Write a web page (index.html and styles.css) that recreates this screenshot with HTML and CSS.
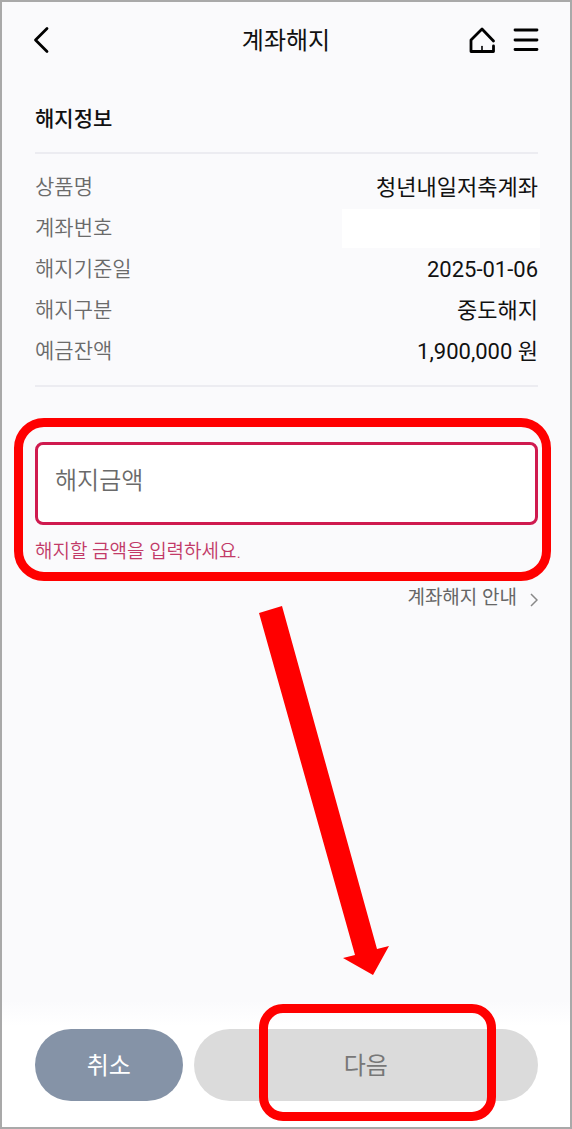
FILE: index.html
```html
<!DOCTYPE html>
<html lang="ko">
<head>
  <meta charset="UTF-8" />
  <meta name="viewport" content="width=device-width, initial-scale=1" />
  <title>계좌해지</title>
  <link rel="stylesheet" href="styles.css">
</head>
<body>
  <header class="top-bar">
    <button type="button" class="icon-btn" aria-label="뒤로">
      <svg width="18" height="28" viewBox="0 0 18 28"><path d="M14 2.500 2.500 14 14 25.500" /></svg>
    </button>
    <h1>계좌해지</h1>
    <div class="top-actions">
      <button type="button" class="icon-btn" aria-label="홈">
        <svg width="28" height="28" viewBox="0 0 28 28">
          <path d="M25.500 15 14 3 3 14v11.500h22.500V20" />
          <path class="door" d="M14 20.500v5" />
        </svg>
      </button>
      <button type="button" class="icon-btn" aria-label="메뉴">
        <svg width="26" height="28" viewBox="0 0 26 28"><path d="M2 4h22M2 14h22M2 23.500h22" /></svg>
      </button>
    </div>
  </header>

  <main>
    <h2>해지정보</h2>
    <dl class="info">
      <div class="row"><dt>상품명</dt><dd>청년내일저축계좌</dd></div>
      <div class="row"><dt>계좌번호</dt><dd class="masked"></dd></div>
      <div class="row"><dt>해지기준일</dt><dd>2025-01-06</dd></div>
      <div class="row"><dt>해지구분</dt><dd>중도해지</dd></div>
      <div class="row"><dt>예금잔액</dt><dd>1,900,000 원</dd></div>
    </dl>

    <div class="field marked">
      <input type="text" id="amount" inputmode="numeric" placeholder="해지금액" aria-label="해지금액" aria-describedby="amount-error" />
      <p class="error" id="amount-error">해지할 금액을 입력하세요.</p>
    </div>

    <div class="guide">
      <a href="#">계좌해지 안내
        <svg width="8" height="14" viewBox="0 0 8 14"><path d="M1 1l6 6-6 6" /></svg>
      </a>
      <svg class="arrow" width="131" height="371" viewBox="0 0 131 371"><path d="M0 8 23 1 118 344l12-3-16 29-30-17 12-3z" /></svg>
    </div>
  </main>

  <footer>
    <button type="button" class="cancel">취소</button>
    <div class="next-wrap marked">
      <button type="button" class="next">다음</button>
    </div>
  </footer>
</body>
</html>
```
FILE: styles.css
```css
:root {
  --bg: #fafafc;
  --text: #111;
  --muted: #6a6a6a;
  --line: #ececf1;
  --danger: #cf1a4f;
  --mark: #ff0000;
}
* {
  box-sizing: border-box;
}
body {
  margin: 0;
  min-height: 100vh;
  display: flex;
  flex-direction: column;
  border: 2px solid #a9a9a9;
  background: var(--bg);
  color: var(--text);
  font-family: Roboto, "Noto Sans CJK KR", sans-serif;
  font-size: 22px;
}
h1, h2, p, dl, dd {
  margin: 0;
}
button, input {
  font-family: inherit;
}
.top-bar {
  display: grid;
  grid-template-columns: 1fr auto 1fr;
  align-items: center;
  height: 76px;
  padding: 0 31px;
}
h1 {
  padding-top: 2px;
  font-size: 24px;
  font-weight: 400;
  line-height: 36px;
}
.top-actions {
  display: flex;
  justify-content: flex-end;
  gap: 17px;
}
.icon-btn {
  display: flex;
  justify-self: start;
  padding: 0;
  border: 0;
  background: none;
}
.icon-btn svg {
  fill: none;
  stroke: #000;
  stroke-width: 2.8;
  stroke-linecap: round;
  stroke-linejoin: round;
}
.icon-btn .door {
  stroke-width: 1.6;
}
main {
  flex: 1;
  padding: 26px 32px 0 33px;
}
h2 {
  font-size: 21px;
  font-weight: 500;
  line-height: 30px;
}
.info {
  margin-top: 18px;
  padding: 13px 0;
  border-top: 2px solid var(--line);
  border-bottom: 2px solid var(--line);
}
.row {
  display: flex;
  justify-content: space-between;
  align-items: center;
  line-height: 41px;
}
dt {
  font-size: 21px;
  font-weight: 350;
  color: var(--muted);
}
.masked {
  width: 198px;
  height: 39px;
  margin-right: -2px;
  background: #fff;
}
/* red highlight drawn round a control */
.marked {
  position: relative;
}
.marked::after {
  content: "";
  position: absolute;
  border: 9px solid var(--mark);
  pointer-events: none;
}
.field {
  margin-top: 55px;
}
.field::after {
  inset: -24px -13px -14px -21px;
  border-radius: 30px;
}
.field input {
  display: block;
  width: 100%;
  height: 83px;
  padding: 0 17px 6px;
  border: 3px solid var(--danger);
  border-radius: 8px;
  background: #fff;
  color: var(--text);
  font-size: 24px;
  font-weight: 350;
  outline: none;
}
.field input::placeholder {
  color: var(--muted);
}
.error {
  padding: 13px 0 1px;
  color: #c23a68;
  font-size: 19px;
  font-weight: 350;
  line-height: 28px;
}
.guide {
  position: relative;
  display: flex;
  justify-content: flex-end;
  margin-top: 16px;
}
.guide a {
  display: flex;
  align-items: center;
  gap: 13px;
  color: #666;
  font-size: 19px;
  line-height: 30px;
  text-decoration: none;
}
.guide a svg {
  margin-top: 4px;
  fill: none;
  stroke: #888;
  stroke-width: 1.5;
}
.arrow {
  position: absolute;
  top: 22px;
  left: 224px;
  fill: var(--mark);
}
footer {
  display: flex;
  gap: 11px;
  padding: 29px 32px 26px 33px;
  background: linear-gradient(var(--bg), #fff 26px);
}
footer button {
  height: 72px;
  padding: 0 0 4px;
  border: 0;
  border-radius: 36px;
  font-size: 24px;
}
.cancel {
  flex: 3;
  background: #8593a7;
  color: #fff;
}
.next-wrap {
  flex: 7;
}
.next-wrap::after {
  inset: -25px 42px -20px 65px;
  border-radius: 24px;
}
.next {
  width: 100%;
  background: #dbdbdb;
  color: #777;
}
```
